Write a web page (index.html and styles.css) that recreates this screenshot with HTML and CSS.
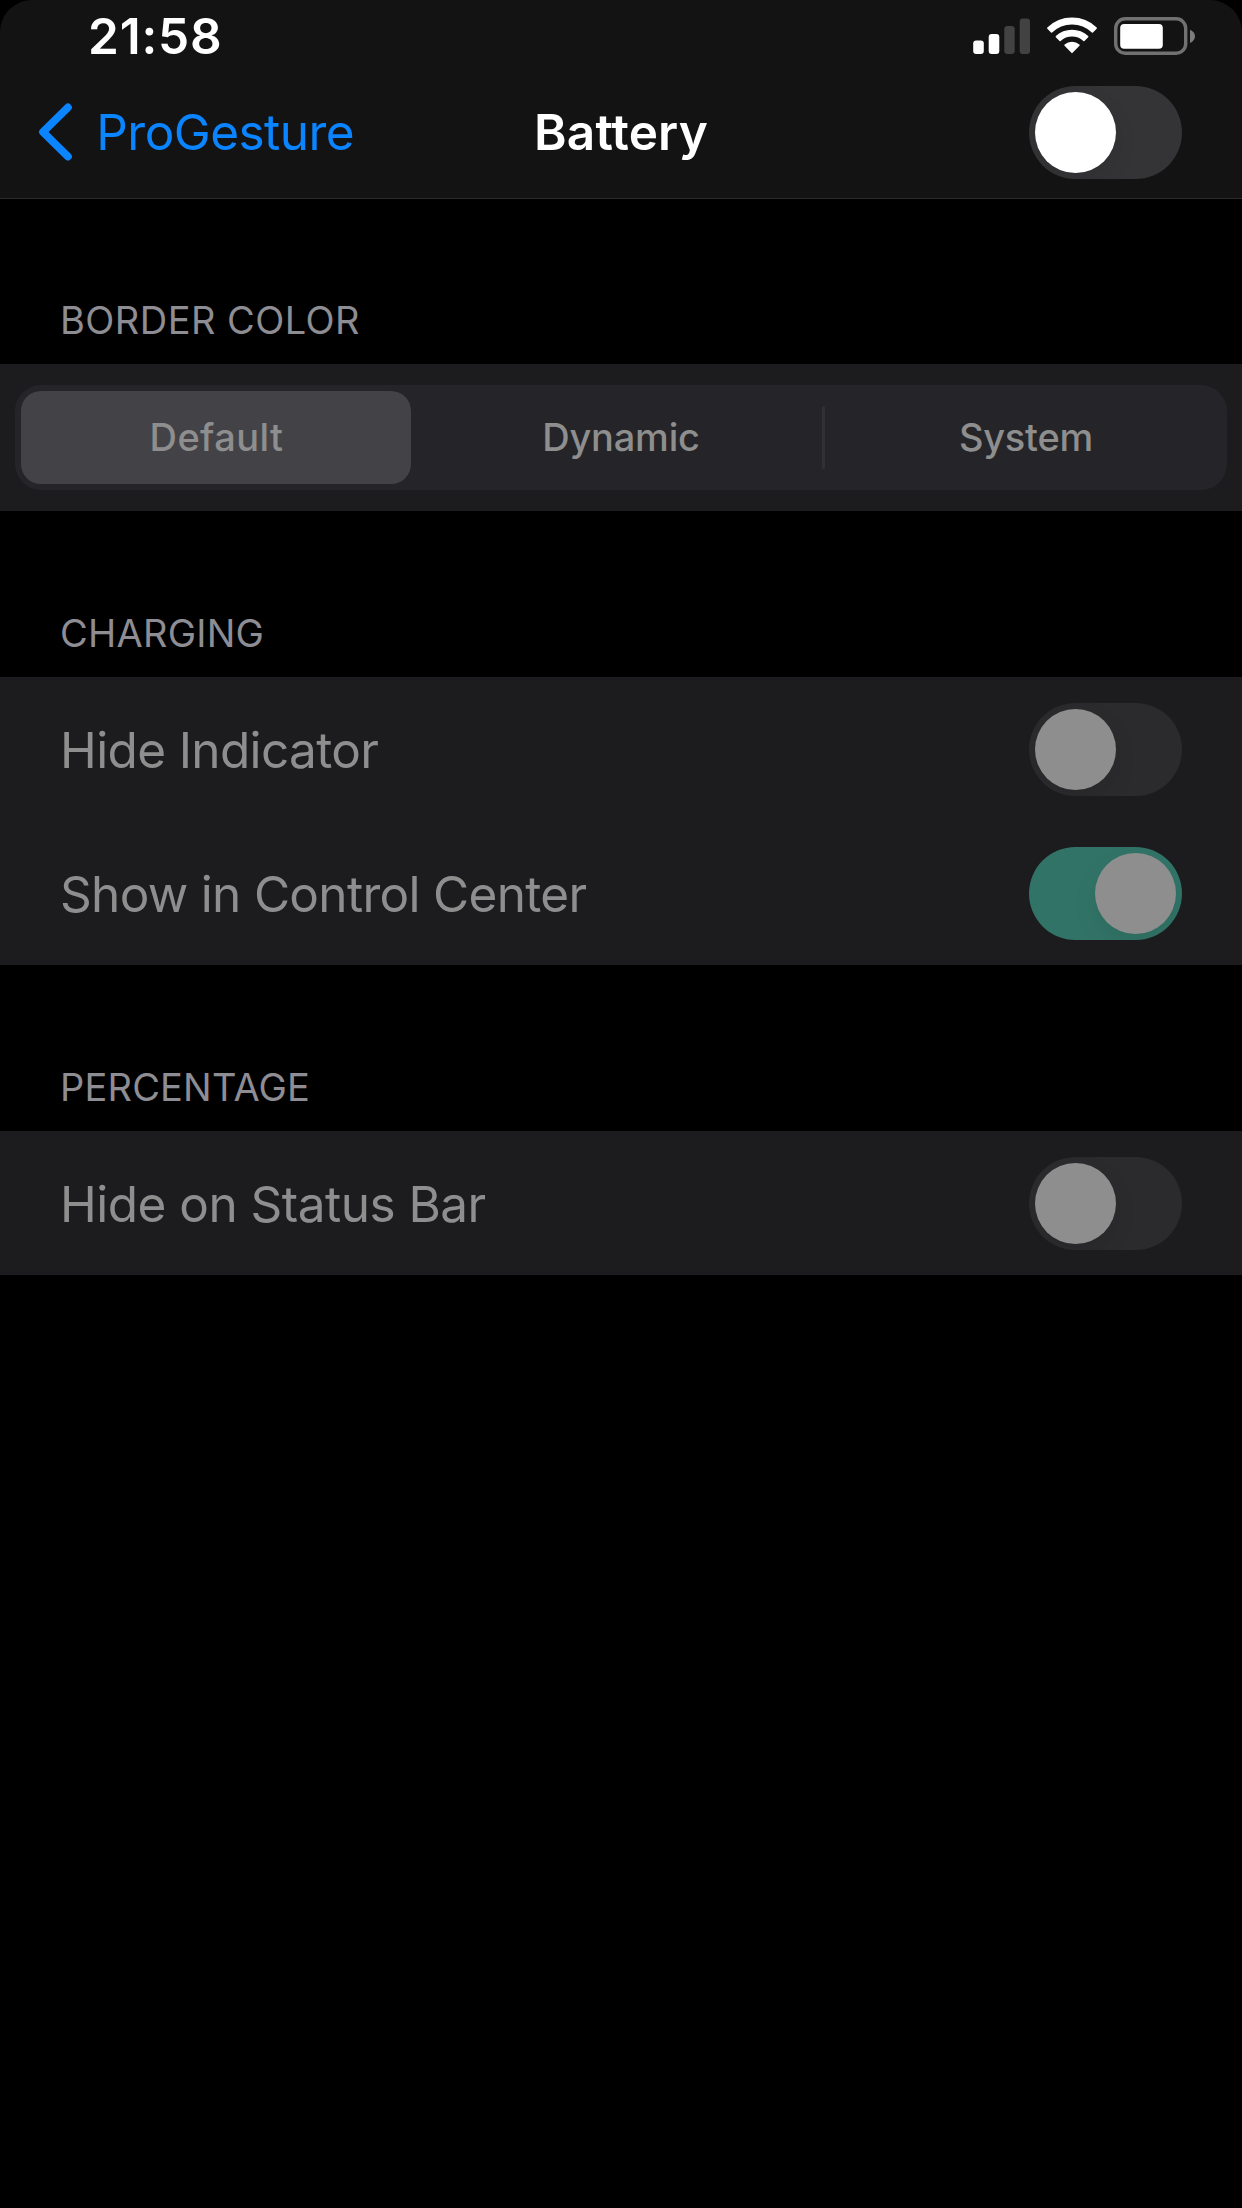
FILE: index.html
```html
<!DOCTYPE html>
<html lang="en">
<head>
<meta charset="utf-8">
<title>Battery</title>
<link rel="stylesheet" href="styles.css">
</head>
<body>
<header class="top">
  <div class="status">
    <span class="time">21:58</span>
    <div class="status-icons">
      <svg class="signal" width="57" height="36" viewBox="0 0 57 36">
        <g fill="#fff"><rect x=".2" y="22.6" width="10.6" height="13.4" rx="3"/><rect x="15.7" y="16" width="10.6" height="20" rx="3"/></g>
        <g fill="#424242"><rect x="31.3" y="8" width="10.4" height="28" rx="3"/><rect x="46.7" y=".6" width="10.3" height="35.4" rx="3"/></g>
      </svg>
      <svg class="wifi" width="50" height="37" viewBox="0 0 50 37">
        <g fill="#fff" stroke="#fff" stroke-width="1.6" stroke-linejoin="round">
          <path d="M.9 11.1A34.8 34.8 0 0 1 49.1 11.1L45.4 14.9A29.4 29.4 0 0 0 4.6 14.9Z"/>
          <path d="M9.4 19.7A22.9 22.9 0 0 1 40.6 19.7L36.9 23.4A17.6 17.6 0 0 0 13.1 23.4Z"/>
          <path d="M18.1 28.2A10.5 10.5 0 0 1 31.9 28.2L25 35.3Z"/>
        </g>
      </svg>
      <svg class="battery" width="82" height="38" viewBox="0 0 82 38">
        <rect x="1.7" y="1.8" width="70" height="34.4" rx="9.5" fill="none" stroke="#717171" stroke-width="3.4"/>
        <rect x="6.2" y="7" width="42.6" height="24.8" rx="4" fill="#fff"/>
        <path d="M76 12.8Q81 15 81 19.3T76 26Z" fill="#7c7c7c"/>
      </svg>
    </div>
  </div>
  <nav class="nav">
    <a class="back">
      <svg width="34" height="58" viewBox="0 0 34 58"><path d="M29.9 4.4 5 29 29.9 53.6" fill="none" stroke="#0a84ff" stroke-width="7.8" stroke-linecap="round" stroke-linejoin="round"/></svg>
      <span>ProGesture</span>
    </a>
    <h1 class="title">Battery</h1>
    <div class="nav-end"><span class="switch bright"></span></div>
  </nav>
</header>

<main>
  <section>
    <h2 class="heading border-heading">BORDER COLOR</h2>
    <div class="group segment-group">
      <div class="segments">
        <span class="segment selected">Default</span>
        <span class="segment dynamic">Dynamic</span>
        <span class="divider"></span>
        <span class="segment system">System</span>
      </div>
    </div>
  </section>
  <section>
    <h2 class="heading charging-heading">CHARGING</h2>
    <div class="group">
      <div class="row"><span class="label">Hide Indicator</span><span class="switch"></span></div>
      <div class="row"><span class="label long">Show in Control Center</span><span class="switch on"></span></div>
    </div>
  </section>
  <section>
    <h2 class="heading percentage-heading">PERCENTAGE</h2>
    <div class="group">
      <div class="row"><span class="label status-label">Hide on Status Bar</span><span class="switch"></span></div>
    </div>
  </section>
</main>
</body>
</html>
```
FILE: styles.css
```css
* {
  box-sizing: border-box;
}

body {
  margin: 0;
  min-height: 2208px;
  background: #000;
  color: #8e8e8e;
  font-family: Inter, "Liberation Sans", sans-serif;
  font-size: 49.5px;
  line-height: 60px;
  white-space: nowrap;
}

.top {
  height: 199px;
  background: #131313;
  border-bottom: 1px solid #2b2b2c;
  border-radius: 32px 32px 0 0;
}

.status {
  display: flex;
  justify-content: space-between;
  height: 66px;
  padding: 6px 46px 0 88px;
}

.time {
  color: #fff;
  font-weight: 600;
  letter-spacing: 0.83px;
}

.status-icons {
  display: flex;
  align-items: flex-start;
  padding-top: 12px;
}

.wifi {
  margin: -1px 17px 0;
}

.battery {
  margin-top: -1px;
}

.nav {
  display: grid;
  grid-template-columns: 1fr auto 1fr;
  align-items: center;
  height: 132px;
  padding: 0 60px;
}

.back {
  display: flex;
  align-items: center;
  gap: 24.3px;
  margin-left: -22px;
  color: #0a84ff;
  letter-spacing: -0.54px;
}

.title {
  margin: 0;
  color: #fff;
  font-size: 49.5px;
  font-weight: 600;
  letter-spacing: 0.17px;
}

.nav-end {
  display: flex;
  justify-content: flex-end;
}

.heading {
  display: flex;
  align-items: flex-end;
  height: 166px;
  margin: 0;
  padding: 0 60px 21px;
  color: #8d8d93;
  font-size: 38px;
  font-weight: 400;
  line-height: 46px;
}

.border-heading {
  height: 165px;
  letter-spacing: 0.46px;
}

.charging-heading {
  letter-spacing: 0.24px;
}

.percentage-heading {
  letter-spacing: 0.19px;
}

.group {
  background: #1c1c1e;
}

.segment-group {
  height: 147px;
  padding: 21px 15px;
}

.segments {
  display: flex;
  align-items: center;
  height: 105px;
  background: #252529;
  border-radius: 26px;
}

.segment {
  flex: 1;
  padding-bottom: 2px;
  font-size: 38px;
  font-weight: 500;
  line-height: 46px;
  text-align: center;
}

.selected {
  flex: 0 0 390px;
  height: 93px;
  margin: 0 8px 0 6px;
  padding: 23px 0 0 1px;
  background: #434347;
  border-radius: 20px;
  letter-spacing: 0.4px;
}

.dynamic,
.system {
  letter-spacing: -0.22px;
}

.dynamic {
  padding-left: 1px;
}

.divider {
  width: 3px;
  height: 63px;
  background: #313135;
  border-radius: 2px;
}

.row {
  display: flex;
  align-items: center;
  justify-content: space-between;
  height: 144px;
  padding: 0 60px;
}

.label {
  padding-top: 2px;
  letter-spacing: -0.64px;
}

.long {
  letter-spacing: -0.69px;
}

.status-label {
  letter-spacing: -0.52px;
}

.switch {
  display: flex;
  flex: none;
  width: 153px;
  height: 93px;
  padding: 6px;
  overflow: hidden;
  background: #2b2b2d;
  border-radius: 47px;
}

.switch::before {
  content: "";
  width: 81px;
  height: 81px;
  background: #8e8e8e;
  border-radius: 50%;
  box-shadow: 0 9px 24px rgba(0, 0, 0, 0.08);
}

.row .switch {
  margin-top: 1px;
}

.on {
  justify-content: flex-end;
  background: #317467;
}

.bright {
  background: #343436;
}

.bright::before {
  background: #fff;
}
```
